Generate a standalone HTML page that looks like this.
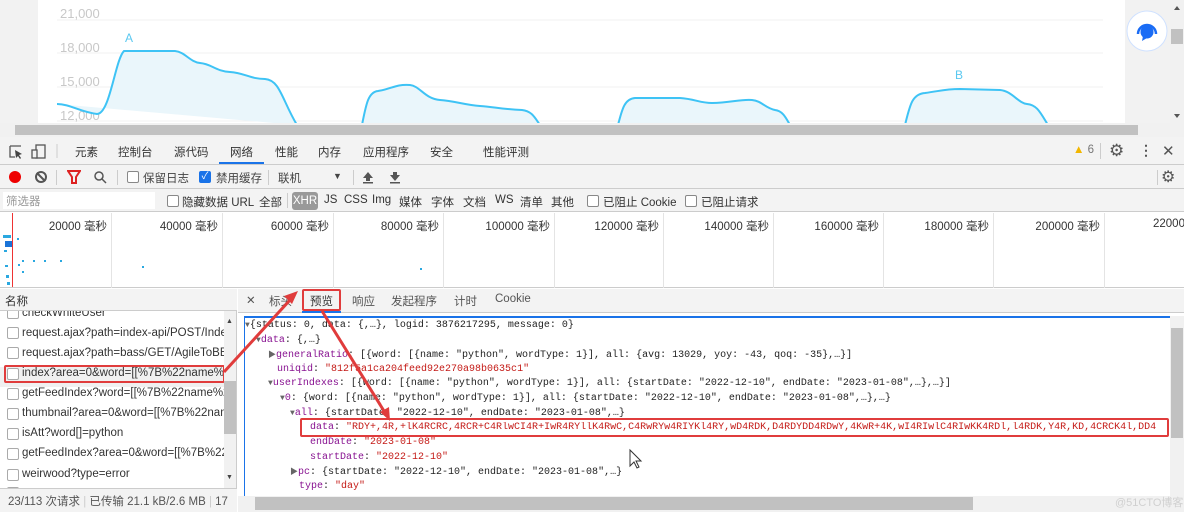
<!DOCTYPE html>
<html><head><meta charset="utf-8"><style>
*{margin:0;padding:0;box-sizing:border-box}
body{width:1184px;height:512px;overflow:hidden;background:#fff;font-family:"Liberation Sans","Noto Sans CJK SC",sans-serif;font-size:11.5px;color:#333;position:relative}
.a{position:absolute;white-space:nowrap}
.cb{position:absolute;width:12px;height:12px;border:1px solid #888;border-radius:2px;background:#fff}
.mono{font-family:"Liberation Mono","Noto Sans CJK SC",monospace;font-size:10px;color:#222}
.k{color:#881391}.s{color:#c41a16}.t{color:#666;font-size:8px}
.vd{position:absolute;width:1px;background:#ccc}
.tl{position:absolute;top:218px;width:100px;text-align:right;white-space:nowrap}
</style></head><body>
<!-- top page -->
<div class="a" style="left:0;top:0;width:1184px;height:125px;background:#f2f2f2"></div>
<div class="a" style="left:38px;top:0;width:1087px;height:125px;background:#fff"></div>
<svg class="a" style="left:0;top:0" width="1184" height="125">
<g stroke="#f0f0f0"><line x1="57" y1="20" x2="1103" y2="20"/><line x1="57" y1="53" x2="1103" y2="53"/><line x1="57" y1="87" x2="1103" y2="87"/><line x1="57" y1="121" x2="1103" y2="121"/></g>
<g fill="#c8c8c8" font-size="13" font-family="Liberation Sans"><text x="60" y="18">21,000</text><text x="60" y="52">18,000</text><text x="60" y="86">15,000</text><text x="60" y="120">12,000</text></g>
<g fill="#eaf6fb" stroke="#3ec3f5" stroke-width="2">
<path d="M57,104 C70,104 80,112 97,114 C110,114 115,60 124,51 L175,51 C185,52 190,62 200,63 C212,64 215,71 230,72 C245,73 250,79 265,79 C280,80 282,100 297,125"/>
<path d="M362,125 C366,105 368,92 378,91 C392,89 395,84 410,85 C420,86 425,99 440,100 C455,101 465,105 480,106 C495,107 500,109 522,110 C532,111 535,118 540,125"/>
<path d="M618,125 C622,110 624,99 635,98 L680,98 C695,99 700,103 712,103 C730,103 740,99 752,100 C762,101 765,108 775,110 C783,111 786,118 790,125"/>
<path d="M905,125 C910,105 912,94 925,93 C940,91 945,89 960,89 L1000,90 C1012,91 1018,103 1027,104 C1037,105 1040,112 1048,125"/>
</g>
<g fill="#5ac8f0" font-size="12"><text x="125" y="42">A</text><text x="955" y="79">B</text></g>
<circle cx="1147" cy="31" r="20" fill="#fff" stroke="#cfe1ff"/>
<path d="M1138,34 a9,9 0 1 1 18,0" fill="none" stroke="#1a6cf5" stroke-width="2.5"/>
<circle cx="1147" cy="32" r="6.5" fill="#1a6cf5"/><path d="M1143,36 l-1,5 5,-3z" fill="#1a6cf5"/>
<rect x="1170" y="0" width="14" height="125" fill="#f1f1f1"/><rect x="1171" y="29" width="12" height="15" fill="#c1c1c1"/>
<path d="M1174,10 l3,-4 3,4z M1174,114 l3,4 3,-4z" fill="#555"/>
</svg>
<div class="a" style="left:0;top:123px;width:1184px;height:14px;background:#f1f1f1"></div>
<div class="a" style="left:15px;top:125px;width:1123px;height:10px;background:#c1c1c1"></div>
<!-- tab bar -->
<div class="a" style="left:0;top:137px;width:1184px;height:28px;background:#f3f3f3;border-bottom:1px solid #ccc"></div>
<svg class="a" style="left:0;top:137px" width="60" height="28"><path d="M10,9h11M10,9v11h5" fill="none" stroke="#555" stroke-width="1.3"/><path d="M15,13l7,4-3,1 2,3-1,1-2-3-2,2z" fill="#444"/><rect x="36" y="8" width="9" height="13" fill="none" stroke="#555" stroke-width="1.3"/><rect x="32" y="13" width="5" height="8" fill="#f3f3f3" stroke="#555" stroke-width="1.3"/><line x1="57" y1="7" x2="57" y2="21" stroke="#ccc"/></svg>
<div class="a" style="left:75px;top:144px">元素</div>
<div class="a" style="left:118px;top:144px">控制台</div>
<div class="a" style="left:174px;top:144px">源代码</div>
<div class="a" style="left:230px;top:144px">网络</div>
<div class="a" style="left:219px;top:162px;width:45px;height:2px;background:#1a73e8"></div>
<div class="a" style="left:275px;top:144px">性能</div>
<div class="a" style="left:318px;top:144px">内存</div>
<div class="a" style="left:363px;top:144px">应用程序</div>
<div class="a" style="left:430px;top:144px">安全</div>
<div class="a" style="left:483px;top:144px">性能评测</div>
<div class="a" style="left:1073px;top:144px;color:#777"><span style="color:#f2b600">▲</span> 6</div>
<div class="vd" style="left:1100px;top:143px;height:16px"></div>
<div class="a" style="left:1109px;top:141px;font-size:17px;color:#555">⚙</div>
<div class="a" style="left:1139px;top:142px;font-size:14px;color:#555;font-weight:bold">⋮</div>
<div class="a" style="left:1162px;top:142px;font-size:15px;color:#555">✕</div>
<!-- toolbar -->
<div class="a" style="left:0;top:165px;width:1184px;height:24px;background:#f3f3f3;border-bottom:1px solid #ccc"></div>
<div class="a" style="left:9px;top:171px;width:12px;height:12px;border-radius:50%;background:#e00"></div>
<div class="a" style="left:35px;top:171px;width:12px;height:12px;border-radius:50%;border:2px solid #555"></div>
<div class="a" style="left:40px;top:171px;width:2px;height:12px;background:#555;transform:rotate(-45deg)"></div>
<div class="vd" style="left:56px;top:170px;height:15px"></div>
<svg class="a" style="left:67px;top:170px" width="14" height="14"><path d="M1,1h12l-4,6v6h-4v-6z" fill="none" stroke="#d22" stroke-width="2"/></svg>
<svg class="a" style="left:93px;top:170px" width="14" height="14"><circle cx="6" cy="6" r="4" fill="none" stroke="#555" stroke-width="1.5"/><line x1="9" y1="9" x2="13" y2="13" stroke="#555" stroke-width="1.5"/></svg>
<div class="vd" style="left:117px;top:170px;height:15px"></div>
<div class="cb" style="left:127px;top:171px"></div><div class="a" style="left:143px;top:170px;color:#444">保留日志</div>
<div class="cb" style="left:199px;top:171px;background:#1a73e8;border-color:#1a73e8;color:#fff;font-size:10px;line-height:10px;text-align:center">✓</div><div class="a" style="left:216px;top:170px;color:#444">禁用缓存</div>
<div class="vd" style="left:268px;top:170px;height:15px"></div>
<div class="a" style="left:278px;top:170px;color:#444">联机</div><div class="a" style="left:333px;top:171px;font-size:9px;color:#444">▼</div>
<div class="vd" style="left:353px;top:170px;height:15px"></div>
<svg class="a" style="left:361px;top:170px" width="45" height="14"><path d="M7,2l-5,6h3v3h4v-3h3z" fill="#555"/><rect x="2" y="12" width="10" height="1.5" fill="#555"/><path d="M34,11l-5,-6h3v-3h4v3h3z" fill="#555"/><rect x="29" y="12" width="10" height="1.5" fill="#555"/></svg>
<div class="vd" style="left:1157px;top:170px;height:15px"></div>
<div class="a" style="left:1161px;top:167px;font-size:16px;color:#555">⚙</div>
<!-- filter row -->
<div class="a" style="left:0;top:189px;width:1184px;height:23px;background:#f3f3f3;border-bottom:1px solid #ccc"></div>
<div class="a" style="left:3px;top:192px;width:152px;height:17px;background:#fff;color:#999;padding:1px 3px">筛选器</div>
<div class="cb" style="left:167px;top:195px"></div><div class="a" style="left:182px;top:194px">隐藏数据 URL</div>
<div class="a" style="left:259px;top:194px">全部</div>
<div class="vd" style="left:287px;top:193px;height:15px"></div>
<div class="a" style="left:292px;top:192px;width:26px;height:18px;background:#999;color:#fff;border-radius:3px;text-align:center;line-height:18px">XHR</div>
<div class="a" style="left:324px;top:194px">JS</div><div class="a" style="left:344px;top:194px">CSS</div><div class="a" style="left:372px;top:194px">Img</div>
<div class="a" style="left:399px;top:194px">媒体</div><div class="a" style="left:431px;top:194px">字体</div><div class="a" style="left:463px;top:194px">文档</div>
<div class="a" style="left:495px;top:194px">WS</div><div class="a" style="left:520px;top:194px">清单</div><div class="a" style="left:551px;top:194px">其他</div>
<div class="cb" style="left:587px;top:195px"></div><div class="a" style="left:603px;top:194px">已阻止 Cookie</div>
<div class="cb" style="left:685px;top:195px"></div><div class="a" style="left:701px;top:194px">已阻止请求</div>
<!-- timeline -->
<div class="a" style="left:0;top:213px;width:1184px;height:75px;background:#fff;border-bottom:1px solid #ccc"></div>
<div class="vd" style="left:111px;top:213px;height:75px;background:#e4e4e4"></div><div class="vd" style="left:222px;top:213px;height:75px;background:#e4e4e4"></div>
<div class="vd" style="left:333px;top:213px;height:75px;background:#e4e4e4"></div><div class="vd" style="left:443px;top:213px;height:75px;background:#e4e4e4"></div>
<div class="vd" style="left:554px;top:213px;height:75px;background:#e4e4e4"></div><div class="vd" style="left:663px;top:213px;height:75px;background:#e4e4e4"></div>
<div class="vd" style="left:773px;top:213px;height:75px;background:#e4e4e4"></div><div class="vd" style="left:883px;top:213px;height:75px;background:#e4e4e4"></div>
<div class="vd" style="left:993px;top:213px;height:75px;background:#e4e4e4"></div><div class="vd" style="left:1104px;top:213px;height:75px;background:#e4e4e4"></div>
<div class="tl" style="left:7px">20000 毫秒</div><div class="tl" style="left:118px">40000 毫秒</div><div class="tl" style="left:229px">60000 毫秒</div>
<div class="tl" style="left:339px">80000 毫秒</div><div class="tl" style="left:450px">100000 毫秒</div><div class="tl" style="left:559px">120000 毫秒</div>
<div class="tl" style="left:669px">140000 毫秒</div><div class="tl" style="left:779px">160000 毫秒</div><div class="tl" style="left:889px">180000 毫秒</div>
<div class="tl" style="left:1000px">200000 毫秒</div><div class="a" style="left:1153px;top:218px">22000</div>
<div class="a" style="left:12px;top:213px;width:1px;height:74px;background:#e33"></div>
<svg class="a" style="left:0;top:230px" width="450" height="58"><g fill="#2aa8e0"><rect x="3" y="5" width="8" height="3"/><rect x="5" y="11" width="7" height="6" fill="#1b74d8"/><rect x="4" y="20" width="3" height="2"/><rect x="5" y="35" width="3" height="2"/><rect x="6" y="45" width="3" height="3"/><rect x="7" y="52" width="3" height="3"/><rect x="17" y="8" width="2" height="2"/><rect x="18" y="34" width="2" height="2"/><rect x="22" y="30" width="2" height="2"/><rect x="33" y="30" width="2" height="2"/><rect x="44" y="30" width="2" height="2"/><rect x="60" y="30" width="2" height="2"/><rect x="22" y="41" width="2" height="2"/><rect x="142" y="36" width="2" height="2"/><rect x="420" y="38" width="2" height="2"/></g></svg>
<!-- left list -->
<div class="a" style="left:0;top:289px;width:237px;height:223px;background:#fff;border-right:1px solid #ccc"></div>
<div class="a" style="left:0;top:289px;width:237px;height:22px;background:#f3f3f3;border-bottom:1px solid #ccc;padding:4px 5px">名称</div>
<div class="a" style="left:0;top:311px;width:224px;height:178px;overflow:hidden;font-size:11.5px">
<div class="a" style="top:-4px;left:22px;color:#333">checkWhiteUser</div>
<div class="a" style="top:16px;left:22px">request.ajax?path=index-api/POST/Index</div>
<div class="a" style="top:36px;left:22px">request.ajax?path=bass/GET/AgileToBBer</div>
<div class="a" style="top:56px;left:0;width:224px;height:20px;background:#f0f0f0"></div>
<div class="a" style="top:56px;left:22px">index?area=0&amp;word=[[%7B%22name%2</div>
<div class="a" style="top:76px;left:22px">getFeedIndex?word=[[%7B%22name%22</div>
<div class="a" style="top:96px;left:22px">thumbnail?area=0&amp;word=[[%7B%22nam</div>
<div class="a" style="top:116px;left:22px">isAtt?word[]=python</div>
<div class="a" style="top:136px;left:22px">getFeedIndex?area=0&amp;word=[[%7B%22.</div>
<div class="a" style="top:157px;left:22px">weirwood?type=error</div>
<div class="cb" style="left:7px;top:-4px;border-color:#aaa"></div><div class="cb" style="left:7px;top:16px;border-color:#aaa"></div><div class="cb" style="left:7px;top:36px;border-color:#aaa"></div><div class="cb" style="left:7px;top:57px;border-color:#aaa"></div><div class="cb" style="left:7px;top:77px;border-color:#aaa"></div><div class="cb" style="left:7px;top:97px;border-color:#aaa"></div><div class="cb" style="left:7px;top:117px;border-color:#aaa"></div><div class="cb" style="left:7px;top:137px;border-color:#aaa"></div><div class="cb" style="left:7px;top:158px;border-color:#aaa"></div><div class="cb" style="left:7px;top:176px;border-color:#aaa"></div>
</div>
<div class="a" style="left:4px;top:365px;width:221px;height:18px;border:2px solid #e03c3c;border-radius:2px"></div>
<div class="a" style="left:224px;top:311px;width:12px;height:177px;background:#f1f1f1"></div>
<div class="a" style="left:224px;top:381px;width:12px;height:53px;background:#c1c1c1"></div>
<div class="a" style="left:226px;top:318px;font-size:7px;color:#444">▲</div><div class="a" style="left:226px;top:474px;font-size:7px;color:#444">▼</div>
<div class="a" style="left:0;top:488px;width:237px;height:24px;background:#f3f3f3;border-top:1px solid #ccc;color:#555;padding:4px 8px">23/113 次请求 <span style="color:#ccc">|</span> 已传输 21.1 kB/2.6 MB <span style="color:#ccc">|</span> 17</div>
<!-- right panel -->
<div class="a" style="left:238px;top:289px;width:946px;height:24px;background:#f3f3f3;border-bottom:1px solid #ccc"></div>
<div class="a" style="left:246px;top:293px;color:#555">✕</div>
<div class="a" style="left:269px;top:293px;color:#555">标头</div>
<div class="a" style="left:310px;top:293px;color:#333">预览</div>
<div class="a" style="left:302px;top:311px;width:39px;height:2px;background:#1a73e8"></div>
<div class="a" style="left:302px;top:289px;width:39px;height:22px;border:2px solid #e03c3c;border-radius:2px"></div>
<div class="a" style="left:352px;top:293px;color:#555">响应</div>
<div class="a" style="left:391px;top:293px;color:#555">发起程序</div>
<div class="a" style="left:454px;top:293px;color:#555">计时</div>
<div class="a" style="left:495px;top:293px;color:#555">Cookie</div>
<div class="a" style="left:244px;top:316px;width:926px;height:180px;border:1px solid #1a73e8;border-bottom:none;border-right:none;border-top-width:2px"></div>
<div class="mono">
<div class="a" style="left:245px;top:320px"><span class="t">▼</span>{status: 0, data: {,…}, logid: 3876217295, message: 0}</div>
<div class="a" style="left:256px;top:335px"><span class="t">▼</span><span class="k">data</span>: {,…}</div>
<div class="a" style="left:268px;top:349px"><span class="t">▶</span><span class="k">generalRatio</span>: [{word: [{name: "python", wordType: 1}], all: {avg: 13029, yoy: -43, qoq: -35},…}]</div>
<div class="a" style="left:277px;top:364px"><span class="k">uniqid</span>: <span class="s">"812f5a1ca204feed92e270a98b0635c1"</span></div>
<div class="a" style="left:268px;top:378px"><span class="t">▼</span><span class="k">userIndexes</span>: [{word: [{name: "python", wordType: 1}], all: {startDate: "2022-12-10", endDate: "2023-01-08",…},…}]</div>
<div class="a" style="left:280px;top:393px"><span class="t">▼</span><span class="k">0</span>: {word: [{name: "python", wordType: 1}], all: {startDate: "2022-12-10", endDate: "2023-01-08",…},…}</div>
<div class="a" style="left:290px;top:408px"><span class="t">▼</span><span class="k">all</span>: {startDate: "2022-12-10", endDate: "2023-01-08",…}</div>
<div class="a" style="left:310px;top:422px;width:856px;overflow:hidden"><span class="k">data</span>: <span class="s">"RDY+,4R,+lK4RCRC,4RCR+C4RlwCI4R+IwR4RYllK4RwC,C4RwRYw4RIYKl4RY,wD4RDK,D4RDYDD4RDwY,4KwR+4K,wI4RIwlC4RIwKK4RDl,l4RDK,Y4R,KD,4CRCK4l,DD4</span></div>
<div class="a" style="left:310px;top:437px"><span class="k">endDate</span>: <span class="s">"2023-01-08"</span></div>
<div class="a" style="left:310px;top:452px"><span class="k">startDate</span>: <span class="s">"2022-12-10"</span></div>
<div class="a" style="left:290px;top:466px"><span class="t">▶</span><span class="k">pc</span>: {startDate: "2022-12-10", endDate: "2023-01-08",…}</div>
<div class="a" style="left:299px;top:481px"><span class="k">type</span>: <span class="s">"day"</span></div>
</div>
<div class="a" style="left:300px;top:418px;width:869px;height:19px;border:2px solid #e03c3c;border-radius:2px"></div>
<div class="a" style="left:1170px;top:316px;width:14px;height:180px;background:#f1f1f1"></div>
<div class="a" style="left:1171px;top:328px;width:12px;height:110px;background:#c1c1c1"></div>
<div class="a" style="left:238px;top:496px;width:946px;height:16px;background:#f1f1f1"></div>
<div class="a" style="left:255px;top:497px;width:718px;height:13px;background:#c1c1c1"></div>
<div class="a" style="left:1115px;top:494px;font-size:11px;color:#d0d0d0">@51CTO博客</div>
<!-- arrows & cursor -->
<svg class="a" style="left:0;top:0" width="1184" height="512">
<g stroke="#e03c3c" stroke-width="3" fill="#e03c3c">
<line x1="224" y1="372" x2="290" y2="300"/><path d="M298,291 l-14,5 8,8z" stroke="none"/>
<line x1="322" y1="311" x2="384" y2="411"/><path d="M390,421 l-1,-14 -9,5z" stroke="none"/>
</g>
<path d="M630,450 v16 l4,-4 3,6 2,-1 -3,-6 5,0z" fill="#fff" stroke="#333" stroke-width="1"/>
</svg>
</body></html>
